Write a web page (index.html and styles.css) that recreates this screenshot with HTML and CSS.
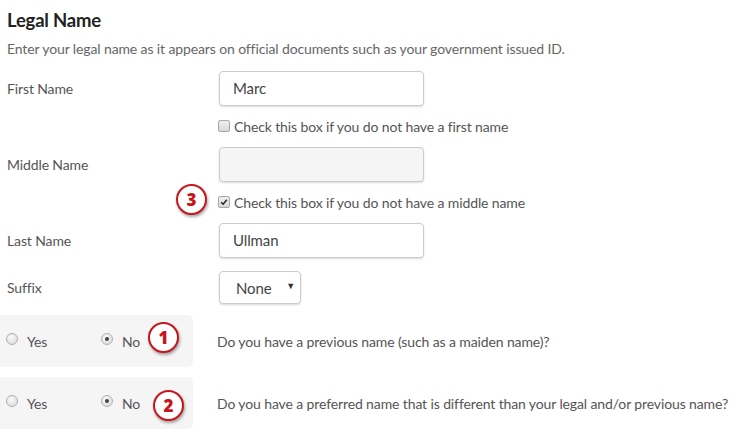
FILE: index.html
```html
<!DOCTYPE html>
<html>
<head>
<meta charset="utf-8">
<link rel="stylesheet" href="styles.css">
</head>
<body>
<div class="form">
  <h1 class="title">Legal Name</h1>
  <p class="desc">Enter your legal name as it appears on official documents such as your government issued ID.</p>

  <div class="row first">
    <div class="label">First Name</div>
    <div class="input">Marc</div>
  </div>
  <div class="check-row">
    <span class="box"></span><span class="check-text">Check this box if you do not have a first name</span>
  </div>

  <div class="row">
    <div class="label">Middle Name</div>
    <div class="input disabled"></div>
  </div>
  <div class="check-row">
    <span class="badge badge-3">3</span>
    <span class="box checked"><svg viewBox="0 0 12 12" width="12" height="12"><path d="M2.6 6.2 L4.9 8.6 L9.4 3.2" fill="none" stroke="#222" stroke-width="1.8"/></svg></span><span class="check-text">Check this box if you do not have a middle name</span>
  </div>

  <div class="row">
    <div class="label">Last Name</div>
    <div class="input">Ullman</div>
  </div>

  <div class="row suffix">
    <div class="label">Suffix</div>
    <div class="select"><span class="sel-text">None</span><span class="caret">▼</span></div>
  </div>

  <div class="question q1">
    <div class="panel">
      <span class="radio"></span><span class="opt opt-yes">Yes</span>
      <span class="radio on"></span><span class="opt">No</span>
      <span class="badge badge-1">1</span>
    </div>
    <div class="qtext">Do you have a previous name (such as a maiden name)?</div>
  </div>

  <div class="question q2">
    <div class="panel">
      <span class="radio"></span><span class="opt opt-yes">Yes</span>
      <span class="radio on"></span><span class="opt">No</span>
      <span class="badge badge-2">2</span>
    </div>
    <div class="qtext">Do you have a preferred name that is different than your legal and/or previous name?</div>
  </div>
</div>
</body>
</html>
```

FILE: styles.css
```css
* { box-sizing: border-box; }
body {
  margin: 0;
  background: #fff;
  font-family: Lato, "Open Sans", sans-serif;
  color: #555;
  font-size: 14px;
  letter-spacing: -0.12px;
}
.form { width: 752px; }
.title {
  margin: 0;
  padding: 8px 0 0 7px;
  font-size: 18.5px;
  font-weight: bold;
  color: #222;
  line-height: 24px;
  height: 38px;
  letter-spacing: -0.2px;
}
.desc {
  margin: 0;
  padding-left: 7px;
  color: #666;
  font-size: 14px;
  line-height: 22px;
  height: 33px;
}
.row {
  display: flex;
  align-items: center;
  height: 35px;
}
.label {
  width: 219px;
  padding-left: 7px;
  color: #555;
}
.input {
  width: 205px;
  height: 35px;
  border: 1px solid #ccc;
  border-radius: 4px;
  box-shadow: 0 1px 2px rgba(0,0,0,0.15);
  padding-left: 13px;
  line-height: 33px;
  font-size: 15px;
  color: #444;
  background: #fff;
}
.input.disabled { background: #f5f5f5; }
.check-row {
  position: relative;
  display: flex;
  align-items: center;
  height: 41px;
  padding-left: 218px;
}
.box {
  width: 12px;
  height: 12px;
  border: 1px solid #a8a8a8;
  border-radius: 2px;
  background: linear-gradient(#f0f0f0, #d8d8d8);
  display: flex;
  align-items: center;
  justify-content: center;
  margin-right: 4px;
  margin-top: -2px;
}
.box svg { display: block; }
.check-text { color: #555; font-size: 14px; }
.suffix { margin-top: 13px; height: 33px; }
.select {
  width: 82px;
  height: 33px;
  border: 1px solid #ccc;
  border-radius: 4px;
  box-shadow: 0 1px 2px rgba(0,0,0,0.15);
  display: flex;
  align-items: center;
  font-size: 15px;
  color: #444;
}
.sel-text { padding-left: 16px; flex: 1; }
.caret { font-size: 9px; padding-right: 5px; color: #333; margin-top: -4px; }
.question {
  display: flex;
  align-items: center;
  height: 52px;
}
.q1 { margin-top: 11px; }
.q2 { margin-top: 10px; }
.panel {
  position: relative;
  width: 193px;
  height: 52px;
  background: #f5f5f5;
  border-radius: 0 5px 5px 0;
  display: flex;
  align-items: center;
  padding-left: 6px;
}
.radio {
  width: 12px;
  height: 12px;
  border-radius: 50%;
  border: 1px solid #b0b0b0;
  background: radial-gradient(circle at 40% 35%, #fafafa, #d6d6d6);
  margin-right: 9px;
  margin-top: -4px;
  position: relative;
}
.radio.on::after {
  content: "";
  position: absolute;
  left: 3px; top: 3px;
  width: 4px; height: 4px;
  border-radius: 50%;
  background: #444;
}
.opt { color: #555; font-size: 14px; margin-top: 0; }
.opt-yes { width: 74px; }
.qtext { padding-left: 24px; color: #555; font-size: 14px; }
.badge {
  position: absolute;
  width: 31px;
  height: 31px;
  border-radius: 50%;
  border: 2px solid #c8141b;
  background: #fff;
  color: #c8141b;
  font-weight: 900;
  font-size: 17px;
  letter-spacing: 0;
  display: flex;
  align-items: center;
  justify-content: center;
  box-shadow: 1px 2px 3px rgba(0,0,0,0.35);
  font-family: "Open Sans", sans-serif;
}
.badge-3 { left: 176px; top: 2px; }
.badge-1 { left: 148px; top: 7px; }
.badge-2 { left: 153px; top: 13px; }
```
